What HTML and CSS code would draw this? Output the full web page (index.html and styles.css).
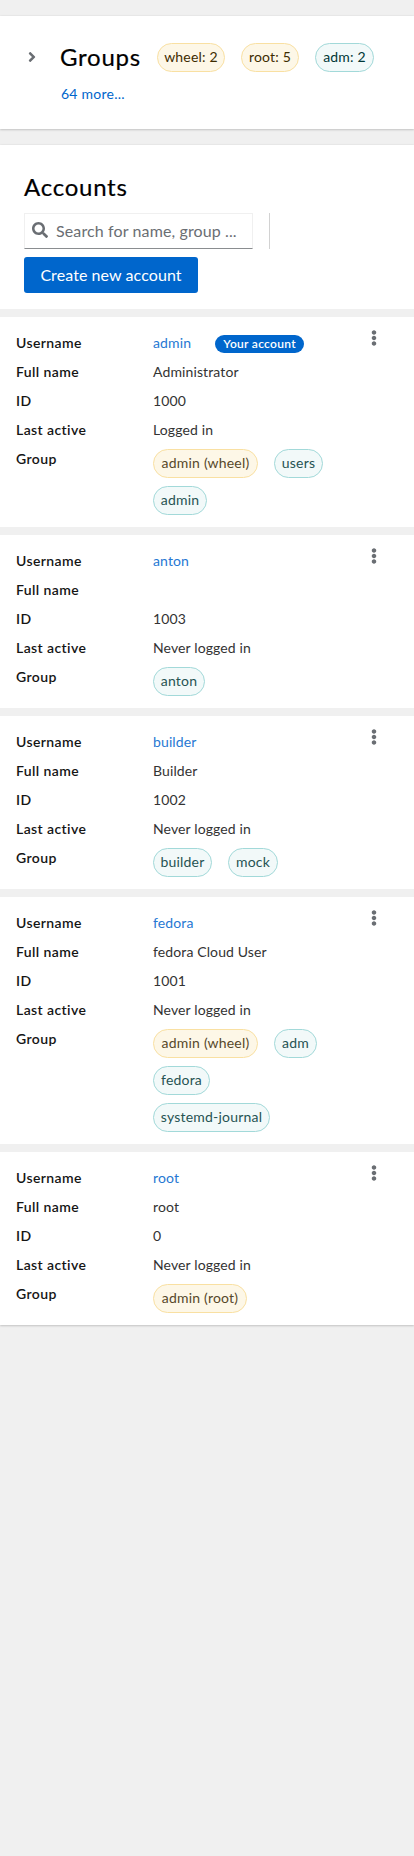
FILE: index.html
```html
<!DOCTYPE html>
<html lang="en">
<head>
<meta charset="utf-8">
<meta name="viewport" content="width=device-width, initial-scale=1">
<title>Accounts</title>
<link rel="stylesheet" href="styles.css">
</head>
<body>
<svg class="defs" width="0" height="0" aria-hidden="true">
  <symbol id="kebab" viewBox="0 0 192 512"><path d="M96 184c39.800 0 72 32.200 72 72s-32.200 72-72 72-72-32.200-72-72 32.200-72 72-72zM24 80c0 39.800 32.200 72 72 72s72-32.200 72-72S135.800 8 96 8 24 40.200 24 80zm0 352c0 39.800 32.200 72 72 72s72-32.200 72-72-32.200-72-72-72-72 32.200-72 72z"/></symbol>
</svg>
<main class="page">
  <section class="card groups">
    <button class="toggle" aria-label="Expand groups">
      <svg width="10" height="16" viewBox="0 0 256 512"><path d="M224.300 273l-136 136c-9.400 9.400-24.600 9.400-33.900 0l-22.600-22.600c-9.400-9.400-9.400-24.600 0-33.900l96.400-96.400-96.400-96.400c-9.400-9.400-9.400-24.600 0-33.900L54.300 103c9.400-9.400 24.600-9.400 33.900 0l136 136c9.500 9.400 9.500 24.600.1 34z"/></svg>
    </button>
    <div class="groups-body">
      <h2 class="title">Groups</h2>
      <span class="chip gold w-wheel">wheel: 2</span>
      <span class="chip gold w-rootn">root: 5</span>
      <span class="chip cyan w-admn">adm: 2</span>
      <a class="more">64 more...</a>
    </div>
  </section>

  <section class="card accounts">
    <header class="toolbar">
      <h2 class="title accounts-title">Accounts</h2>
      <div class="tools">
        <div class="search">
          <svg width="16" height="16" viewBox="0 0 512 512"><path d="M505 442.700L405.300 343c-4.500-4.500-10.600-7-17-7H372c27.600-35.300 44-79.700 44-128C416 93.100 322.900 0 208 0S0 93.100 0 208s93.100 208 208 208c48.300 0 92.700-16.400 128-44v16.300c0 6.400 2.500 12.500 7 17l99.700 99.700c9.400 9.400 24.600 9.400 33.900 0l28.300-28.300c9.400-9.400 9.400-24.600.1-34zM208 336c-70.700 0-128-57.200-128-128 0-70.700 57.200-128 128-128 70.700 0 128 57.200 128 128 0 70.700-57.200 128-128 128z"/></svg>
          <span>Search for name, group ...</span>
        </div>
        <div class="divider"></div>
      </div>
      <button class="create">Create new account</button>
    </header>

    <article class="account">
      <dl class="fields">
        <dt>Username</dt><dd class="user"><a>admin</a><span class="badge">Your account</span></dd>
        <dt>Full name</dt><dd>Administrator</dd>
        <dt>ID</dt><dd>1000</dd>
        <dt>Last active</dt><dd>Logged in</dd>
        <dt>Group</dt><dd class="chips"><span class="chip gold w-adminwheel">admin (wheel)</span><span class="chip cyan w-users">users</span><span class="chip cyan w-admin">admin</span></dd>
      </dl>
      <button class="kebab" aria-label="Actions"><svg width="6" height="16"><use href="#kebab"/></svg></button>
    </article>

    <article class="account">
      <dl class="fields">
        <dt>Username</dt><dd><a>anton</a></dd>
        <dt>Full name</dt><dd></dd>
        <dt>ID</dt><dd>1003</dd>
        <dt>Last active</dt><dd>Never logged in</dd>
        <dt>Group</dt><dd class="chips"><span class="chip cyan w-anton">anton</span></dd>
      </dl>
      <button class="kebab" aria-label="Actions"><svg width="6" height="16"><use href="#kebab"/></svg></button>
    </article>

    <article class="account">
      <dl class="fields">
        <dt>Username</dt><dd><a>builder</a></dd>
        <dt>Full name</dt><dd>Builder</dd>
        <dt>ID</dt><dd>1002</dd>
        <dt>Last active</dt><dd>Never logged in</dd>
        <dt>Group</dt><dd class="chips"><span class="chip cyan w-builder">builder</span><span class="chip cyan w-mock">mock</span></dd>
      </dl>
      <button class="kebab" aria-label="Actions"><svg width="6" height="16"><use href="#kebab"/></svg></button>
    </article>

    <article class="account">
      <dl class="fields">
        <dt>Username</dt><dd><a>fedora</a></dd>
        <dt>Full name</dt><dd>fedora Cloud User</dd>
        <dt>ID</dt><dd>1001</dd>
        <dt>Last active</dt><dd>Never logged in</dd>
        <dt>Group</dt><dd class="chips"><span class="chip gold w-adminwheel">admin (wheel)</span><span class="chip cyan w-adm">adm</span><span class="chip cyan w-fedora">fedora</span><span class="chip cyan w-journal">systemd-journal</span></dd>
      </dl>
      <button class="kebab" aria-label="Actions"><svg width="6" height="16"><use href="#kebab"/></svg></button>
    </article>

    <article class="account">
      <dl class="fields">
        <dt>Username</dt><dd><a>root</a></dd>
        <dt>Full name</dt><dd>root</dd>
        <dt>ID</dt><dd>0</dd>
        <dt>Last active</dt><dd>Never logged in</dd>
        <dt>Group</dt><dd class="chips"><span class="chip gold w-adminroot">admin (root)</span></dd>
      </dl>
      <button class="kebab" aria-label="Actions"><svg width="6" height="16"><use href="#kebab"/></svg></button>
    </article>
  </section>
</main>
</body>
</html>
```
FILE: styles.css
```css
* { box-sizing: border-box; }
html, body { margin: 0; background: #f0f0f0; }
body {
  font-family: Lato, "Open Sans", sans-serif;
  font-size: 14px;
  line-height: 21px;
  letter-spacing: .12px;
  color: #151515;
}
button { font: inherit; letter-spacing: inherit; border: 0; background: none; padding: 0; }
svg { display: block; fill: #6a6e73; }
.defs { position: absolute; }
a { color: #0066cc; }

.page {
  display: flex;
  flex-direction: column;
  gap: 16px;
  min-height: 1856px;
  padding-top: 16px;
}
.card { box-shadow: 0 1px 2px rgba(3, 3, 3, .16), 0 0 2px rgba(3, 3, 3, .08); }
.title {
  margin: 0;
  font-size: 24px;
  font-weight: 400;
  line-height: 29px;
  letter-spacing: .75px;
  color: #000;
  -webkit-text-stroke: .2px #000;
}

.groups { display: flex; height: 113px; padding: 26px 24px 24px 27px; background: #fff; }
.toggle { width: 33px; height: 30px; flex: none; }
.groups-body { display: flex; flex-wrap: wrap; align-content: flex-start; align-items: center; column-gap: 16px; row-gap: 10px; }
.groups-body .title { width: 81px; height: 31px; white-space: nowrap; }
.more { flex-basis: 100%; margin-left: 1px; letter-spacing: .25px; line-height: 22px; }
.groups-body .title + .chip { margin-left: 0; }

.chip {
  display: flex;
  justify-content: center;
  align-items: center;
  height: 29px;
  padding-bottom: 1px;
  border: 1px solid;
  border-radius: 15px;
  line-height: 20px;
  letter-spacing: .2px;
  white-space: nowrap;
}
.gold { background: #fdf7e7; border-color: #f9e0a2; color: #3d2c00; }
.cyan { background: #f2f9f9; border-color: #a2d9d9; color: #003737; }
.w-wheel { width: 68px; }
.w-rootn { width: 58px; }
.w-admn { width: 59px; }
.w-adminwheel { width: 105px; }
.w-users { width: 49px; }
.w-admin { width: 54px; }
.w-anton { width: 52px; }
.w-builder { width: 59px; }
.w-mock { width: 50px; }
.w-adm { width: 43px; }
.w-fedora { width: 57px; }
.w-journal { width: 117px; }
.w-adminroot { width: 94px; }

.accounts { display: flex; flex-direction: column; gap: 8px; }
.toolbar { height: 164px; padding: 27px 24px 16px; background: #fff; }
.accounts-title { margin-bottom: 12px; }
.tools { display: flex; gap: 16px; margin-bottom: 8px; }
.search {
  display: flex;
  align-items: center;
  gap: 8px;
  width: 229px;
  height: 36px;
  padding: 0 7px 2px;
  border: 1px solid #f0f0f0;
  border-bottom-color: #8a8d90;
  font-size: 16px;
  color: #6a6e73;
  white-space: nowrap;
}
.divider { width: 1px; height: 36px; background: #d2d2d2; }
.create {
  display: block;
  width: 174px;
  height: 36px;
  padding-bottom: 2px;
  border-radius: 3px;
  background: #0066cc;
  color: #fff;
  font-size: 16px;
  letter-spacing: .08px;
}

.account { display: flex; padding: 16px 37px 12px 16px; background: #fff; }
.fields {
  flex: 1;
  display: grid;
  grid-template-columns: 137px 1fr;
  grid-auto-rows: minmax(21px, auto);
  row-gap: 8px;
  margin: 0;
  line-height: 19px;
}
.fields dt { font-weight: 600; letter-spacing: .4px; }
.fields dd { margin: 0; color: #333; }
.fields a { color: #2678d3; }
.fields .user { display: flex; align-items: flex-start; gap: 24px; }
.badge {
  height: 18px;
  width: 89px;
  margin-top: 2px;
  border-radius: 9px;
  background: #0066cc;
  color: #fff;
  font-size: 12px;
  font-weight: 600;
  line-height: 18px;
  letter-spacing: .3px;
  text-align: center;
}
.fields .chips { display: flex; flex-wrap: wrap; gap: 8px 16px; padding-right: 32px; }
.chips .gold { color: #57482a; }
.chips .cyan { color: #265353; }
.kebab { flex: none; align-self: flex-start; margin-top: -3px; }
```
